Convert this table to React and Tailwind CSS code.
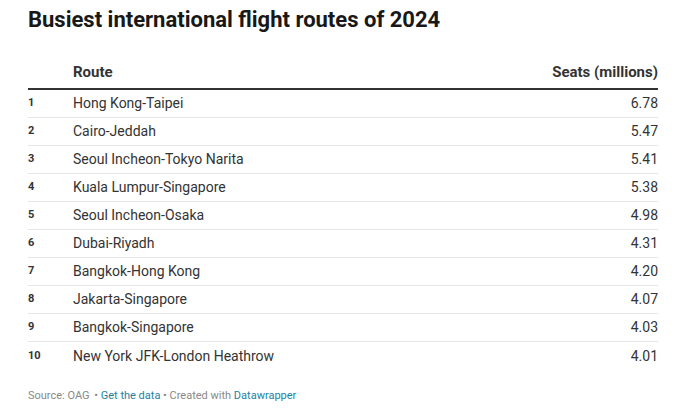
import React from "react";

const rows = [
  ["Hong Kong-Taipei", "6.78"],
  ["Cairo-Jeddah", "5.47"],
  ["Seoul Incheon-Tokyo Narita", "5.41"],
  ["Kuala Lumpur-Singapore", "5.38"],
  ["Seoul Incheon-Osaka", "4.98"],
  ["Dubai-Riyadh", "4.31"],
  ["Bangkok-Hong Kong", "4.20"],
  ["Jakarta-Singapore", "4.07"],
  ["Bangkok-Singapore", "4.03"],
  ["New York JFK-London Heathrow", "4.01"],
];

export default function App() {
  return (
    <div
      className="w-[681px] h-[411px] bg-white px-[28px] pt-[7px] text-[#333]"
      style={{ fontFamily: "Roboto, 'Liberation Sans', sans-serif" }}
    >
      <h1 className="text-[22px] leading-[26px] font-bold text-[#181818]">
        Busiest international flight routes of 2024
      </h1>

      <div className="w-[630px] mt-[23px]">
        {/* header */}
        <div className="flex items-end h-[34px] pb-[7px] border-b-2 border-[#333] text-[15px] leading-[18px] font-bold text-[#333]">
          <div className="w-[45px]" />
          <div className="flex-1">Route</div>
          <div>Seats (millions)</div>
        </div>

        {rows.map(([route, seats], i) => (
          <div
            key={route}
            className={`flex items-center h-[28px] ${i < rows.length - 1 ? "border-b border-[#e6e6e6]" : ""}`}
          >
            <div className="w-[45px] text-[11px] font-bold text-[#333]">{i + 1}</div>
            <div className="flex-1 text-[14px] text-[#333]">{route}</div>
            <div className="text-[14px] text-[#333]">{seats}</div>
          </div>
        ))}
      </div>

      <div className="mt-[19px] text-[11px] leading-[14px] text-[#888]">
        Source: OAG <span className="ml-[2px]">•</span>{" "}
        <span className="text-[#1d81a2]">Get the data</span> • Created with{" "}
        <span className="text-[#1d81a2]">Datawrapper</span>
      </div>
    </div>
  );
}
